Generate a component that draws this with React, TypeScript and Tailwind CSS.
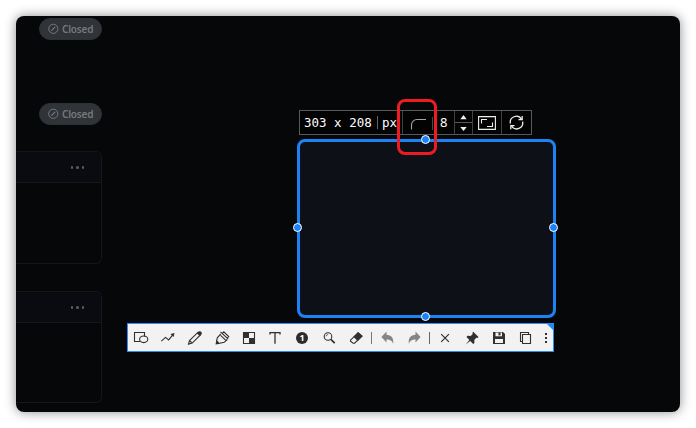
import type { ReactNode } from "react";

function ClosedBadge() {
  return (
    <div className="ml-[23px] flex h-[22px] w-[63px] items-center gap-[3px] rounded-full border border-[#2d3035] bg-[#303338] pl-2 text-[#77797c]">
      <svg width="11" height="12" viewBox="0 0 11 12" fill="none" stroke="currentColor" className="shrink-0">
        <circle cx="5.3" cy="5.8" r="4.6" strokeWidth="1" />
        <path d="M3.4 7.7 7.2 3.9" strokeWidth="1.2" />
      </svg>
      <span className="font-['Noto_Sans',sans-serif] text-[10px] leading-none font-semibold tracking-[-0.2px]">Closed</span>
    </div>
  );
}

function Card({ className }: { className: string }) {
  return (
    <div className={`w-[86px] rounded-r-[6px] border border-l-0 border-[#15171b] ${className}`}>
      <div className="flex h-[31px] items-center justify-end gap-[3px] rounded-tr-[5px] border-b border-[#15171b] bg-[#090b10] pt-px pr-[17px]">
        <i className="size-[2.5px] rounded-full bg-[#5d5f63]" />
        <i className="size-[2.5px] rounded-full bg-[#5d5f63]" />
        <i className="size-[2.5px] rounded-full bg-[#5d5f63]" />
      </div>
    </div>
  );
}

function Tool({ children, muted = false }: { children: ReactNode; muted?: boolean }) {
  return (
    <button className={`flex w-[26.8px] shrink-0 items-center justify-center ${muted ? "text-[#858585]" : "text-[#303030]"}`}>
      <svg width="18" height="18" viewBox="0 0 18 18" fill="none" stroke="currentColor" strokeWidth="1.1">
        {children}
      </svg>
    </button>
  );
}

function Handle({ className }: { className: string }) {
  return <i className={`absolute size-[9px] rounded-full border border-white bg-[#1d82f5] ${className}`} />;
}

function SizeBar() {
  return (
    <div className="absolute top-[94px] left-[283px] flex h-[25px] w-[233px] border border-[#58595b] bg-[#030304] text-white">
      <div className="flex w-[102px] items-center pl-1 font-['DejaVu_Sans_Mono',monospace] text-[12.5px] leading-none">
        <span className="w-[73px] pt-[2px] whitespace-pre">303 x 208</span>
        <i className="h-[13px] w-px bg-[#636466]" />
        <span className="pt-[2px] pl-[4px]">px</span>
      </div>
      <div className="flex w-[52px] items-center border-l border-[#3f4042]">
        <svg width="30" height="22" viewBox="0 0 30 22" fill="none">
          <path d="M8.5 17.5v-4.5a5.5 5.5 0 0 1 5.5-5.5h9" stroke="#a4a4a4" strokeWidth="1.1" />
          <path d="M29.5 5v13" stroke="#48494a" />
        </svg>
        <span className="pl-[7px] font-['Noto_Sans',sans-serif] text-[13px] leading-none">8</span>
      </div>
      <div className="flex w-[18px] flex-col border-l border-[#3f4042]">
        <svg width="17" height="23" viewBox="0 0 17 23" fill="#f1f1f1">
          <path d="M5.3 8.2 8.5 4l3.2 4.2ZM5.3 16h6.4l-3.2 4Z" />
          <path d="M0 11.5h17" stroke="#58595b" />
        </svg>
      </div>
      <div className="flex w-[29px] items-center justify-center border-l border-[#3f4042]">
        <svg width="18" height="14" viewBox="0 0 18 14" fill="none" stroke="#eee" strokeWidth="1.1">
          <path d="M.6.6h16.8v12.8H.6Z" />
          <path d="M3.5 7.5v-4H9M14.5 6.5v4H9" />
        </svg>
      </div>
      <div className="flex flex-1 items-center justify-center border-l border-[#3f4042] pr-px">
        <svg width="17" height="17" viewBox="0 0 17 17" fill="none" stroke="#eee" strokeWidth="1.3">
          <path d="M2.4 9.5A6 6 0 0 1 13.4 5.2M14.6 7.7A6 6 0 0 1 3.6 12" />
          <path d="M14.2 2v3.6h-3.7M2.8 15.2v-3.6h3.7" />
        </svg>
      </div>
    </div>
  );
}

function ToolBar() {
  return (
    <div className="absolute top-[307px] left-[111px] flex h-[29px] w-[427px] items-center border border-[#2a8cff] bg-[#f2f2f2]">
      <Tool>
        <path d="M8 12.5H2.5v-9h10v4" />
        <ellipse cx="11.7" cy="10.3" rx="4.1" ry="3.3" />
      </Tool>
      <Tool>
        <path d="m2.3 12.2 4.2-3.8 3.2 2.5 4.5-5.6" />
        <path d="m11.5 5.1 4-1.1-.9 4Z" fill="currentColor" stroke="none" />
      </Tool>
      <Tool>
        <path d="m2.5 15.1 1-3.6 8.3-8.1 2.6 2.5-8.2 8.2Zm1-3.6 2.7 2.6" />
        <path d="m10.8 4.3 1.5-1.6c1.7-1.6 4.7.8 3 2.8l-1.6 1.6Z" fill="currentColor" stroke="none" />
      </Tool>
      <Tool>
        <path d="m3.6 12 .7-3.2 3.5-4M6.6 14.3l4.6-1 3-2.8M7.5 2.8l7.7 7.4M9.5 4.3l1.3-1.5 4.9 4.8-1.6 1.5M7.6 6.3l5 4.8" />
        <path d="m3.4 10.8 3.9 3.9-4.8.8Z" fill="currentColor" stroke="none" />
      </Tool>
      <Tool>
        <path d="M3.5 3.5h11v11h-11Z" />
        <path d="M9 9V3.5H3.5V9H9v5.5h5.5V9Z" fill="currentColor" stroke="none" />
      </Tool>
      <Tool>
        <path d="M4 5.5V3.7h10v1.8M9 3.7v11" strokeWidth="1.3" />
      </Tool>
      <button className="flex w-[26.8px] shrink-0 items-center justify-center">
        <span className="flex size-[12px] items-center justify-center rounded-full bg-[#2c2c2c] text-[9px] leading-none font-bold text-white">1</span>
      </button>
      <Tool>
        <circle cx="8" cy="7.5" r="3.8" />
        <path d="M6.1 7.3a2 2 0 0 1 2-1.8" strokeWidth=".7" />
        <path d="m10.9 10.3 3.8 3.8" strokeWidth="1.7" />
      </Tool>
      <Tool>
        <path d="m3.5 11.2 7.6-7.3 3.7 3.3-7.2 7-1.5.1-2.6-2.1Z" />
        <path d="m7 7.8 4.1-4.1 3.9 3.4-4.2 4.2Z" fill="currentColor" />
      </Tool>
      <div className="flex w-[5px] shrink-0 justify-center"><i className="h-[12px] w-px bg-[#777]" /></div>
      <Tool muted>
        <path d="M7.5 2.6v3.2c4.5.2 7.4 3 6.7 9-1.3-3.4-3.3-4.4-6.7-4.4v3.2L2.4 8.1Z" fill="currentColor" stroke="none" />
      </Tool>
      <Tool muted>
        <path d="M10.5 2.6v3.2c-4.5.2-7.4 3-6.7 9 1.3-3.4 3.3-4.4 6.7-4.4v3.2l5.1-5.5Z" fill="currentColor" stroke="none" />
      </Tool>
      <div className="flex w-[4px] shrink-0 justify-center"><i className="h-[12px] w-px bg-[#666]" /></div>
      <Tool>
        <path d="m5.2 5.2 7.7 7.7m0-7.7-7.7 7.7" strokeWidth="1.2" />
      </Tool>
      <Tool>
        <path d="m10.2 2.7 5.3 5.3-1 .9-1.2-.2-2 2.2.1 3.2-1.2 1-3-3.2-4.5 3.7 3.7-4.5L3.5 8l1-1.2 3.2.1L9.7 5l-.3-1.2Z" fill="currentColor" stroke="none" />
      </Tool>
      <Tool>
        <path d="M3 3h10l2 2v10H3Z" fill="currentColor" stroke="none" />
        <path d="M5.5 3.5h6.5v3.7H5.5ZM5 10h8v4H5Z" fill="#f2f2f2" stroke="none" />
        <path d="M8.5 3.4h2v3h-2Z" fill="currentColor" stroke="none" />
      </Tool>
      <Tool>
        <path d="M5.5 5.5h8v9h-8Z" />
        <path d="M11.5 5.3V3.5h-8v9h2" />
      </Tool>
      <button className="flex w-[14px] shrink-0 flex-col items-center gap-[2px]">
        <i className="size-[2px] bg-[#303030]" />
        <i className="size-[2px] bg-[#303030]" />
        <i className="size-[2px] bg-[#303030]" />
      </button>
      <svg width="6" height="6" viewBox="0 0 6 6" className="absolute top-0 right-0" fill="#2489f5">
        <path d="M0 0h6v6Z" />
      </svg>
    </div>
  );
}

export default function App() {
  return (
    <main className="h-[428px] w-[696px] overflow-hidden bg-white p-4 font-['Open_Sans',sans-serif]">
      <div className="relative h-[396px] w-[664px] rounded-[8px] bg-[#060709] shadow-[0_0_12px_rgba(0,0,0,0.45)]">
        <aside className="flex flex-col pt-[2px]">
          <ClosedBadge />
          <div className="mt-[63px]"><ClosedBadge /></div>
          <Card className="mt-[26px] h-[113px]" />
          <Card className="mt-[27px] h-[112px]" />
        </aside>
        <section className="absolute top-[123px] left-[281px] h-[179px] w-[259px] rounded-[8px] border-[#1d82f5] border-3 bg-[#0d1017]">
          <Handle className="-top-[7px] left-[121px]" />
          <Handle className="top-[81px] -left-[7px]" />
          <Handle className="top-[81px] -right-[5px]" />
          <Handle className="-bottom-[6px] left-[121px]" />
        </section>
        <SizeBar />
        <ToolBar />
        <div className="absolute top-[83px] left-[381px] h-[56px] w-[40px] rounded-[8px] border-3 border-[#ed1c24]" />
      </div>
    </main>
  );
}
